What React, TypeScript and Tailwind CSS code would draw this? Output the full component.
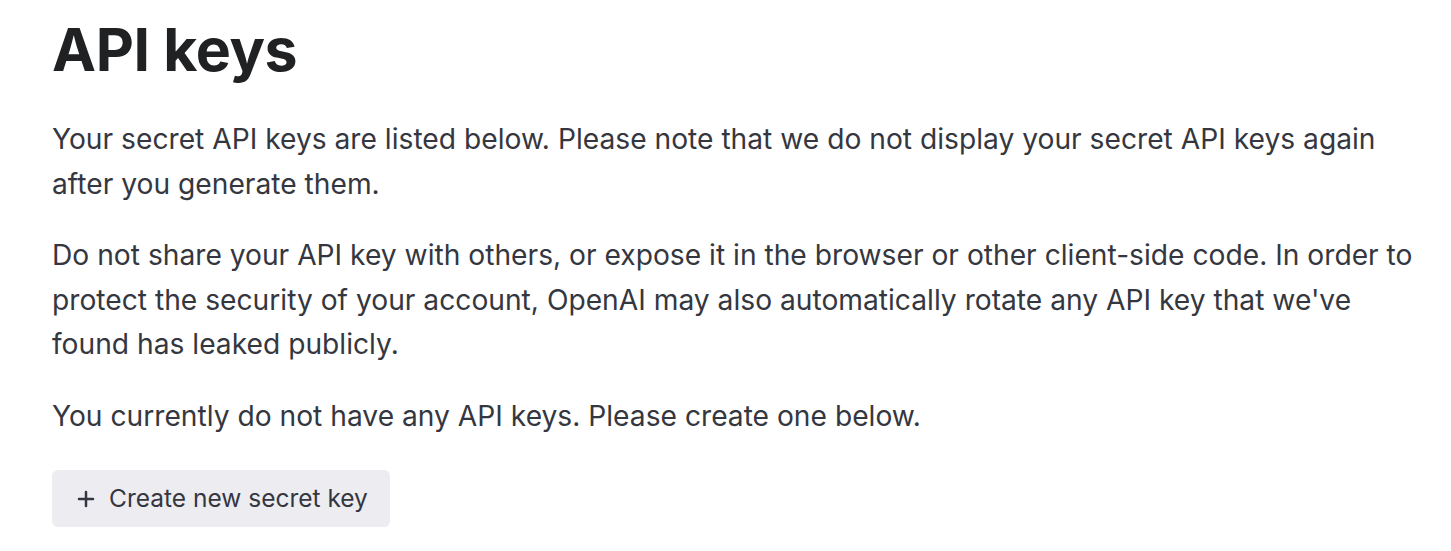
export default function App() {
  return (
    <div className="min-h-[551px] w-full bg-white font-['Inter','Noto_Sans',sans-serif] text-[#353740]">
      <div className="pl-[52px] pr-[20px] pt-[18px]">
        <h1 className="text-[59px] font-bold leading-[64px] tracking-[-0.4px] text-[#202123]">API keys</h1>
        <div className="mt-[35px] space-y-[27px] text-[28.2px] leading-[44.5px]">
          <p>
            Your secret API keys are listed below. Please note that we do not display your secret API keys again
            after you generate them.
          </p>
          <p>
            Do not share your API key with others, or expose it in the browser or other client-side code. In order to
            protect the security of your account, OpenAI may also automatically rotate any API key that we've found
            has leaked publicly.
          </p>
          <p>You currently do not have any API keys. Please create one below.</p>
        </div>
        <button className="mt-[32px] flex h-[57px] items-center gap-[14px] rounded-[6px] bg-[#ececf1] pl-[25px] pr-[22px] text-[24.5px] text-[#353740]">
          <svg width="18" height="18" viewBox="0 0 18 18" fill="none" stroke="currentColor" strokeWidth="2.5" strokeLinecap="round">
            <path d="M9 2v14M2 9h14" />
          </svg>
          Create new secret key
        </button>
      </div>
    </div>
  );
}
